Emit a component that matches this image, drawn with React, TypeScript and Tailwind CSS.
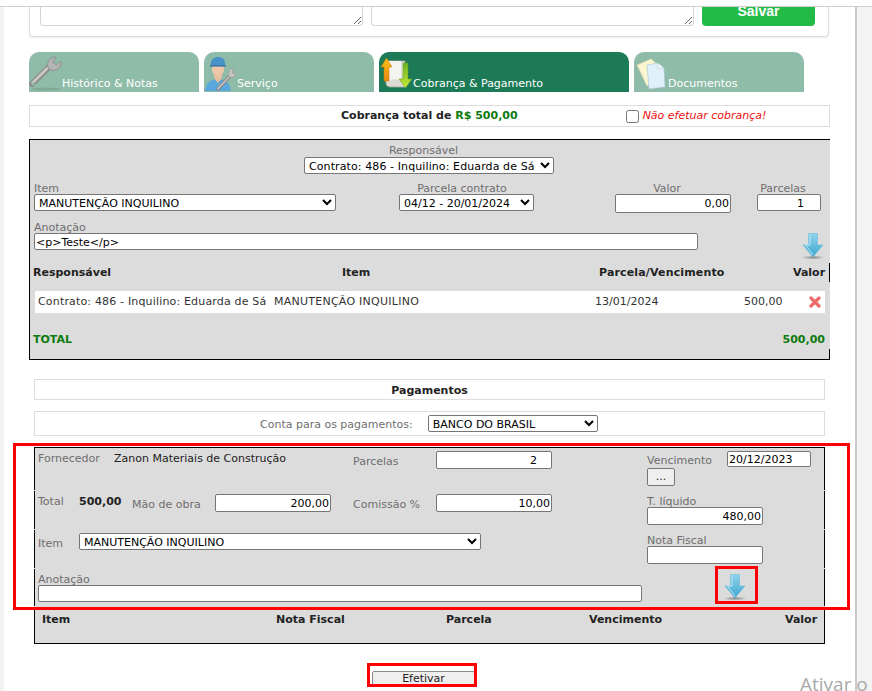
import React from "react";

const base = "h-full w-full bg-white border border-[#767676] rounded-[2px] text-[11px] text-black font-['DejaVu_Sans',sans-serif] outline-none";
const ctl = base + " px-[1px]";
const sel = base + " px-0 pt-[1px]";
const num = ctl + " text-right";
const lab = "text-[11px] leading-[12px] text-[#6e6e6e] whitespace-nowrap";
const labTight = "text-[11px] leading-[11px] text-[#6e6e6e] whitespace-nowrap";

function Arrow({ className = "" }: { className?: string }) {
  return (
    <svg width="26" height="27" viewBox="0 0 26 27" className={className}>
      <defs>
        <linearGradient id="ag" x1="0" y1="0" x2="0" y2="1">
          <stop offset="0" stopColor="#8ed3ea" />
          <stop offset="1" stopColor="#3ea6d2" />
        </linearGradient>
        <radialGradient id="as">
          <stop offset="0" stopColor="#8a8a8a" />
          <stop offset="1" stopColor="#dcdcdc" />
        </radialGradient>
      </defs>
      <ellipse cx="13" cy="24.5" rx="12" ry="2.2" fill="url(#as)" />
      <path d="M8.5 0.5H17.5V12H23L13 24L3 12H8.5Z" fill="url(#ag)" stroke="#6fbcdc" strokeWidth="0.6" />
      <path d="M10 1V12H5.5L13 22" fill="none" stroke="#b9e6f4" strokeWidth="1" />
    </svg>
  );
}

function Wrench() {
  return (
    <svg width="33" height="38" viewBox="0 0 33 38">
      <ellipse cx="17" cy="35" rx="15" ry="1.5" fill="#7fa896" />
      <path d="M3 30L21 12" stroke="#8c8c8c" strokeWidth="6" strokeLinecap="round" />
      <path d="M3.5 29L21 11.5" stroke="#c9c9c9" strokeWidth="2.5" strokeLinecap="round" />
      <path d="M19 14C17 8 21 3 27 3L24 8L27 11L32 7C33 13 27 18 22 16Z" fill="#b4b4b4" stroke="#8a8a8a" strokeWidth="0.8" />
      <circle cx="4" cy="30" r="1.6" fill="#8fbca8" />
    </svg>
  );
}

function Worker() {
  return (
    <svg width="32" height="38" viewBox="0 0 32 38">
      <path d="M1 37C2 28 8 25 14 25C20 25 26 28 27 37Z" fill="#5aa7dc" />
      <path d="M10 24L14 29L18 24L18 18H10Z" fill="#e8c0a0" />
      <ellipse cx="14" cy="15" rx="6" ry="7" fill="#eec7a8" />
      <path d="M7 12C6 5 10 3 14 3C18 3 22 5 21 12Z" fill="#4a93c9" />
      <rect x="6" y="11" width="16" height="1.6" fill="#3a78aa" />
      <path d="M13 36L27 21" stroke="#8a8a8a" strokeWidth="3.5" />
      <path d="M13.5 35L27 21" stroke="#cfcfcf" strokeWidth="1.2" />
      <path d="M25 23C23 18 26 14 30 14L28 18L30 20L32 17C33 21 29 25 25 23Z" fill="#c4c4c4" stroke="#8a8a8a" strokeWidth="0.5" />
    </svg>
  );
}

function Money() {
  return (
    <svg width="34" height="38" viewBox="0 0 34 38">
      <defs>
        <linearGradient id="og" x1="0" y1="0" x2="0" y2="1">
          <stop offset="0" stopColor="#f8c018" />
          <stop offset="1" stopColor="#e98a10" />
        </linearGradient>
        <linearGradient id="gg" x1="0" y1="0" x2="0" y2="1">
          <stop offset="0" stopColor="#6cb324" />
          <stop offset="1" stopColor="#c8e838" />
        </linearGradient>
      </defs>
      <path d="M7 7H26V33H12Q7 33 7 29Z" fill="#dcdcd4" stroke="#a8a8a0" strokeWidth="0.8" />
      <path d="M9 7V28Q12 24 22 26V7Z" fill="#f4f4f0" />
      <path d="M2 13L7.5 4L13 13H10V27H5V13Z" fill="url(#og)" stroke="#c87808" strokeWidth="0.5" />
      <path d="M24 9H29V25H33L26.5 34L20 25H24Z" fill="url(#gg)" stroke="#5e9c1c" strokeWidth="0.5" />
    </svg>
  );
}

function Docs() {
  return (
    <svg width="33" height="38" viewBox="0 0 33 38">
      <path d="M3 11L17 5L24 11L27 26L13 32Z" fill="#fbf6cf" stroke="#d8d4b0" strokeWidth="0.6" />
      <path d="M13 11L24 9L30 14L31 33L15 35Z" fill="#dff0f8" stroke="#a9c4d4" strokeWidth="0.6" />
      <path d="M24 9V14H30Z" fill="#f5fbfe" stroke="#a9c4d4" strokeWidth="0.5" />
    </svg>
  );
}

function Tab({ w, active, icon, label, iconW }: { w: string; active?: boolean; icon: React.ReactNode; label: string; iconW: string }) {
  return (
    <div className={`${w} h-[40px] rounded-t-[10px] flex items-end overflow-hidden ${active ? "bg-[#1c7a56]" : "bg-[#8fbca8]"}`}>
      <div className={`${iconW} h-[40px] flex items-end shrink-0`}>{icon}</div>
      <span className="text-[11px] leading-[12px] pb-[2px] text-white whitespace-nowrap">{label}</span>
    </div>
  );
}

export default function App() {
  return (
    <div className="relative h-[691px] w-[872px] overflow-hidden bg-white flex flex-col font-['DejaVu_Sans',sans-serif] text-[11px] text-[#222]">
      <div className="h-[7px] shrink-0 border-b border-[#cfcfcf] bg-white" />
      <div className="flex flex-1 min-h-0">
        <div className="w-[4px] bg-[#f3f3f3]" />
        <main className="w-[851px] pl-[25px]">
          {/* top card */}
          <div className="w-[800px] h-[30px] border border-t-0 border-[#dddddd] rounded-b-[4px] shadow-[0_1px_2px_rgba(0,0,0,0.08)] flex pl-[10px]">
            <textarea className="w-[323px] h-[19px] bg-white border border-t-0 border-[#d4d4d4] rounded-b-[4px] outline-none" />
            <textarea className="w-[323px] h-[19px] ml-[8px] bg-white border border-t-0 border-[#d4d4d4] rounded-b-[4px] outline-none" />
            <div className="w-[113px] h-[19px] ml-[8px] bg-[#22bb48] rounded-b-[4px] flex items-end justify-center overflow-hidden">
              <span className="font-['Liberation_Sans',sans-serif] font-bold text-[14px] leading-[16px] pb-[7px] text-white">Salvar</span>
            </div>
          </div>

          {/* tabs */}
          <div className="flex gap-[5px] mt-[15px]">
            <Tab w="w-[170px]" iconW="w-[33px]" icon={<Wrench />} label="Histórico & Notas" />
            <Tab w="w-[170px]" iconW="w-[33px]" icon={<Worker />} label="Serviço" />
            <Tab w="w-[250px]" iconW="w-[34px]" active icon={<Money />} label="Cobrança & Pagamento" />
            <Tab w="w-[170px]" iconW="w-[34px]" icon={<Docs />} label="Documentos" />
          </div>

          {/* cobrança */}
          <div className="w-[801px] h-[22px] mt-[13px] border border-[#dddddd] flex items-center">
            <span className="ml-[311px] font-bold whitespace-nowrap">
              Cobrança total de <span className="text-[#0d7a0d]">R$ 500,00</span>
            </span>
            <input type="checkbox" className="ml-[108px] w-[13px] h-[13px]" />
            <span className="ml-[4px] italic text-[#ee1111] whitespace-nowrap">Não efetuar cobrança!</span>
          </div>

          {/* panel 1 */}
          <div className="w-[801px] mt-[12px] bg-[#dcdcdc] border-t border-l border-b border-black pt-[5px]">
            <div className="flex flex-col items-start ml-[274px] w-[250px]">
              <div className={`${lab} self-center pr-[11px]`}>Responsável</div>
              <div className="w-[250px] h-[17px]">
                <select className={sel + " tracking-[0.1px]"}><option>Contrato: 486 - Inquilino: Eduarda de Sá</option></select>
              </div>
            </div>

            <div className="flex items-start mt-[9px] ml-[4px]">
              <div className="w-[302px]">
                <div className={labTight}>Item</div>
                <div className="h-[17px]"><select className={sel}><option>MANUTENÇÃO INQUILINO</option></select></div>
              </div>
              <div className="w-[135px] ml-[63px] text-center">
                <div className={`${labTight} pr-[9px]`}>Parcela contrato</div>
                <div className="h-[17px]"><select className={sel}><option>04/12 - 20/01/2024</option></select></div>
              </div>
              <div className="w-[116px] ml-[81px] text-center">
                <div className={`${labTight} pr-[12px]`}>Valor</div>
                <div className="h-[19px]"><input readOnly value="0,00" className={num} /></div>
              </div>
              <div className="w-[64px] ml-[26px] text-center">
                <div className={`${labTight} pr-[12px]`}>Parcelas</div>
                <div className="h-[17px]"><input readOnly value="1" className={ctl + " text-right pr-[16px] pt-[1px]"} /></div>
              </div>
            </div>

            <div className="flex items-start mt-[9px] ml-[4px] h-[36px]">
              <div className="w-[664px]">
                <div className={labTight}>Anotação</div>
                <div className="h-[17px]"><input readOnly value="<p>Teste</p>" className={ctl + " pt-[1px]"} /></div>
              </div>
              <Arrow className="ml-[102px] mt-[11px]" />
            </div>

            <div className="flex items-center h-[19px] mt-[5px] border-r border-black font-bold leading-[12px]">
              <span className="ml-[3px] w-[309px]">Responsável</span>
              <span className="w-[257px]">Item</span>
              <span className="w-[194px] tracking-[0.15px]">Parcela/Vencimento</span>
              <span>Valor</span>
            </div>

            <div className="flex items-center h-[22px] mt-[9px] ml-[5px] w-[790px] bg-white leading-[12px] text-[#333]">
              <span className="ml-[3px] w-[236px] whitespace-nowrap tracking-[0.17px]">Contrato: 486 - Inquilino: Eduarda de Sá</span>
              <span className="w-[321px] whitespace-nowrap tracking-[0.25px]">MANUTENÇÃO INQUILINO</span>
              <span className="w-[149px]">13/01/2024</span>
              <span className="w-[65px]">500,00</span>
              <svg width="12" height="12" viewBox="0 0 12 12">
                <path d="M2 2L10 10M10 2L2 10" stroke="#ec6a6a" strokeWidth="3.2" strokeLinecap="round" />
              </svg>
            </div>

            <div className="flex items-center justify-between h-[18px] mt-[18px] pl-[3px] pr-[5px] font-bold text-[#0d7a0d] leading-[12px]">
              <span>TOTAL</span>
              <span>500,00</span>
            </div>
            <div className="h-[10px] border-r border-black" />
          </div>

          {/* pagamentos */}
          <div className="w-[791px] h-[21px] mt-[19px] ml-[5px] border border-[#dddddd] flex items-center justify-center font-bold pt-[3px]">
            Pagamentos
          </div>
          <div className="w-[791px] h-[25px] mt-[11px] ml-[5px] border border-[#dddddd] flex items-center">
            <span className="ml-[225px] mt-[4px] text-[#6e6e6e] whitespace-nowrap">Conta para os pagamentos:</span>
            <div className="w-[170px] h-[17px] ml-[15px]"><select className={sel}><option>BANCO DO BRASIL</option></select></div>
          </div>

          {/* panel 2 */}
          <div className="w-[791px] mt-[11px] ml-[5px] bg-[#dcdcdc] border-t border-b border-black">
            <div className="h-[42px] border-x border-black flex items-start">
              <span className={`${lab} ml-[3px] mt-[5px] w-[76px]`}>Fornecedor</span>
              <span className="mt-[5px] w-[239px] leading-[12px] whitespace-nowrap">Zanon Materiais de Construção</span>
              <span className={`${lab} mt-[8px] w-[83px]`}>Parcelas</span>
              <div className="w-[116px] h-[18px] mt-[3px]"><input readOnly value="2" className={ctl + " text-right pr-[14px]"} /></div>
              <div className="ml-[95px] w-[164px] mt-[3px]">
                <div className="flex items-start">
                  <span className={`${lab} w-[80px] mt-[4px]`}>Vencimento</span>
                  <div className="w-[84px] h-[16px]"><input readOnly value="20/12/2023" className={ctl} /></div>
                </div>
                <button className="block w-[28px] h-[18px] mt-[1px] bg-[#efefef] border border-[#767676] rounded-[2px] text-[11px] leading-[12px]">...</button>
              </div>
            </div>

            <div className="h-[38px] mt-[1px] border-x border-black flex items-start">
              <span className={`${lab} ml-[3px] mt-[5px] w-[41px]`}>Total</span>
              <span className="mt-[5px] w-[53px] font-bold leading-[12px]">500,00</span>
              <span className={`${lab} mt-[8px] w-[83px]`}>Mão de obra</span>
              <div className="w-[116px] h-[18px] mt-[3px]"><input readOnly value="200,00" className={num} /></div>
              <span className={`${lab} mt-[8px] ml-[22px] w-[83px]`}>Comissão %</span>
              <div className="w-[116px] h-[18px] mt-[3px]"><input readOnly value="10,00" className={num} /></div>
              <div className="ml-[95px] w-[116px] mt-[5px]">
                <div className={labTight}>T. líquido</div>
                <div className="h-[18px]"><input readOnly value="480,00" className={num} /></div>
              </div>
            </div>

            <div className="h-[38px] mt-[1px] border-x border-black flex items-start">
              <span className={`${lab} ml-[3px] mt-[8px] w-[41px]`}>Item</span>
              <div className="w-[402px] h-[17px] mt-[3px]"><select className={sel}><option>MANUTENÇÃO INQUILINO</option></select></div>
              <div className="ml-[166px] w-[116px] mt-[5px]">
                <div className={labTight}>Nota Fiscal</div>
                <div className="h-[18px]"><input readOnly className={ctl} /></div>
              </div>
            </div>

            <div className="h-[37px] mt-[1px] border-x border-black flex items-start">
              <div className="ml-[3px] w-[604px] mt-[5px]">
                <div className={labTight}>Anotação</div>
                <div className="h-[17px]"><input readOnly className={ctl} /></div>
              </div>
              <Arrow className="ml-[80px] mt-[5px]" />
            </div>

            <div className="h-[36px] mt-[1px] border-x border-black flex items-start pt-[7px] font-bold leading-[12px]">
              <span className="ml-[7px] w-[234px]">Item</span>
              <span className="w-[170px]">Nota Fiscal</span>
              <span className="w-[143px]">Parcela</span>
              <span className="w-[196px]">Vencimento</span>
              <span>Valor</span>
            </div>
          </div>

          <button className="block w-[103px] h-[16px] mt-[27px] ml-[343px] bg-[#efefef] border border-[#8a8a8a] rounded-[2px] text-[11px] leading-[12px] text-[#222] text-center">
            Efetivar
          </button>
        </main>
        <div className="w-[2px] bg-[#c9c9c9]" />
        <div className="flex-1 bg-[#f3f3f3]" />
      </div>

      {/* annotations */}
      <div className="absolute left-[13px] top-[443px] w-[837px] h-[167px] border-[3px] border-[#ff0000] pointer-events-none" />
      <div className="absolute left-[715px] top-[566px] w-[43px] h-[38px] border-[3px] border-[#ff0000] pointer-events-none" />
      <div className="absolute left-[367px] top-[663px] w-[110px] h-[24px] border-[3px] border-[#ff0000] pointer-events-none" />
      <div className="absolute left-[800px] top-[672px] text-[19px] leading-[24px] text-[#a9a9a9] font-['Open_Sans',sans-serif] whitespace-nowrap">Ativar o</div>
    </div>
  );
}
